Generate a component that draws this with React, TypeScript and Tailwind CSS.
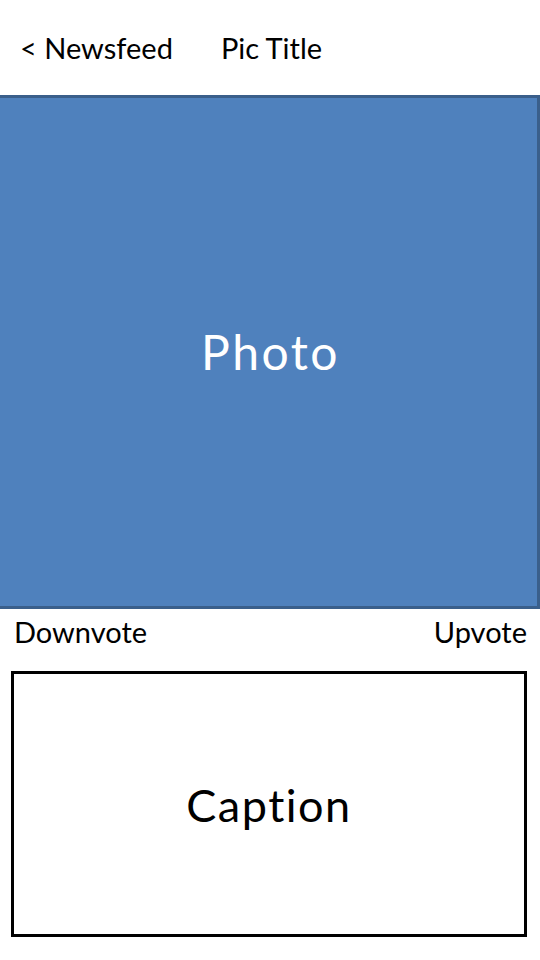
export default function App() {
  return (
    <div className="w-[540px] h-[960px] bg-white overflow-hidden font-['Lato',sans-serif] text-black">
      {/* top bar */}
      <div className="h-[95px] flex items-center text-[29px]">
        <span className="ml-[20px]">&lt; Newsfeed</span>
        <span className="ml-[48px]">Pic Title</span>
      </div>

      {/* photo block */}
      <div className="h-[514px] -ml-[3px] bg-[#4f81bd] border-[3px] border-[#3a5f8b] flex items-center justify-center">
        <span className="text-white text-[48px] tracking-[2.5px] pl-[4px]">Photo</span>
      </div>

      {/* votes */}
      <div className="h-[62px] flex justify-between items-start pt-[8px] px-[13px] text-[29px] leading-none">
        <span className="ml-[1px]">Downvote</span>
        <span>Upvote</span>
      </div>

      {/* caption */}
      <div className="ml-[11px] w-[516px] h-[266px] border-[3px] border-black flex items-center justify-center">
        <span className="text-[45px] tracking-[1.5px] pt-[4px]">Caption</span>
      </div>
    </div>
  );
}
